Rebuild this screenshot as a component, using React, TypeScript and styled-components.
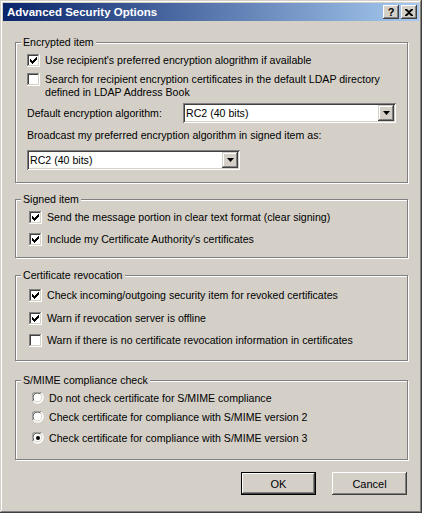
import React from "react";
import styled, { createGlobalStyle } from "styled-components";

const GlobalStyle = createGlobalStyle`
  html, body {
    margin: 0;
    padding: 0;
    background: #d4d0c8;
  }
  body {
    font-family: "Liberation Sans", Arial, sans-serif;
    font-size: 10.6px;
    color: #000;
  }
`;

const Window = styled.div`
  width: 422px;
  height: 513px;
  box-sizing: border-box;
  padding: 3px;
  background: #d4d0c8;
  box-shadow: inset -1px -1px 0 #404040, inset 1px 1px 0 #d4d0c8,
    inset -2px -2px 0 #808080, inset 2px 2px 0 #fff;
  display: flex;
  flex-direction: column;
`;

const TitleBar = styled.div`
  height: 18px;
  display: flex;
  align-items: center;
  padding: 0 2px;
  background: linear-gradient(to right, #0a246a, #a6caf0);
`;

const Title = styled.div`
  color: #fff;
  font-weight: bold;
  font-size: 11.5px;
  margin-left: 2px;
  flex: 1;
`;

const CaptionButtons = styled.div`
  display: flex;
  gap: 2px;
`;

const CaptionButton = styled.div`
  width: 16px;
  height: 14px;
  box-sizing: border-box;
  background: #d4d0c8;
  box-shadow: inset -1px -1px 0 #404040, inset 1px 1px 0 #fff,
    inset -2px -2px 0 #808080;
  display: flex;
  align-items: center;
  justify-content: center;
  font-weight: bold;
  font-size: 11px;
  line-height: 14px;
`;

const Content = styled.div`
  display: flex;
  flex-direction: column;
  padding: 15px 11px 0 12px;
`;

const Group = styled.fieldset<{ $mt?: number }>`
  margin: ${(p) => p.$mt ?? 0}px 0 0 0;
  padding: 0;
  min-width: 0;
  border: 1px solid #808080;
  box-shadow: 1px 1px 0 #fff, inset 1px 1px 0 #fff;
`;

const Legend = styled.legend`
  margin-left: 5px;
  padding: 0 2px;
  line-height: 13px;
  background: #d4d0c8;
`;

const GroupBody = styled.div<{ $pl: number; $pb: number }>`
  display: flex;
  flex-direction: column;
  align-items: flex-start;
  padding: 0 10px ${(p) => p.$pb}px ${(p) => p.$pl}px;
`;

const OptionRow = styled.div<{ $mt: number }>`
  display: flex;
  align-items: flex-start;
  gap: 5px;
  margin-top: ${(p) => p.$mt}px;
  line-height: 13px;
`;

const Label = styled.div<{ $mt?: number; $w?: number }>`
  line-height: 13px;
  margin-top: ${(p) => p.$mt ?? 0}px;
  ${(p) => (p.$w ? `width: ${p.$w}px; flex-shrink: 0;` : "")}
`;

const FieldRow = styled.div<{ $mt: number }>`
  display: flex;
  align-items: center;
  margin-top: ${(p) => p.$mt}px;
`;

const Select = styled.div<{ $mt?: number }>`
  width: 213px;
  height: 20px;
  box-sizing: border-box;
  padding: 2px;
  margin-top: ${(p) => p.$mt ?? 0}px;
  background: #fff;
  box-shadow: inset 1px 1px 0 #808080, inset -1px -1px 0 #fff,
    inset 2px 2px 0 #404040, inset -2px -2px 0 #d4d0c8;
  display: flex;
`;

const SelectValue = styled.div`
  flex: 1;
  padding-left: 1px;
  line-height: 16px;
`;

const ArrowButton = styled.div`
  width: 16px;
  height: 16px;
  box-sizing: border-box;
  background: #d4d0c8;
  box-shadow: inset -1px -1px 0 #404040, inset 1px 1px 0 #d4d0c8,
    inset -2px -2px 0 #808080, inset 2px 2px 0 #fff;
  display: flex;
  align-items: center;
  justify-content: center;
`;

const ButtonRow = styled.div`
  display: flex;
  justify-content: flex-end;
  gap: 16px;
  margin-top: 12px;
  padding-right: 1px;
`;

const PushButton = styled.div<{ $default?: boolean }>`
  width: 75px;
  height: 23px;
  box-sizing: border-box;
  background: #d4d0c8;
  display: flex;
  align-items: center;
  justify-content: center;
  font-size: 11px;
  box-shadow: ${(p) =>
    p.$default
      ? "inset 0 0 0 1px #000, inset -2px -2px 0 #404040, inset 2px 2px 0 #fff, inset -3px -3px 0 #808080"
      : "inset -1px -1px 0 #404040, inset 1px 1px 0 #fff, inset -2px -2px 0 #808080"};
`;

const CHECK =
  "M3 5h1v3h-1z M4 6h1v3h-1z M5 7h1v3h-1z M6 6h1v3h-1z M7 5h1v3h-1z M8 4h1v3h-1z M9 3h1v3h-1z";

function CheckBox({ checked }: { checked?: boolean }) {
  return (
    <svg width="13" height="13" viewBox="0 0 13 13" style={{ flexShrink: 0 }}>
      <rect x="0" y="0" width="13" height="13" fill="#fff" />
      <rect x="0" y="0" width="12" height="1" fill="#808080" />
      <rect x="0" y="0" width="1" height="12" fill="#808080" />
      <rect x="1" y="1" width="10" height="1" fill="#404040" />
      <rect x="1" y="1" width="1" height="10" fill="#404040" />
      <rect x="1" y="11" width="11" height="1" fill="#d4d0c8" />
      <rect x="11" y="1" width="1" height="11" fill="#d4d0c8" />
      {checked && <path d={CHECK} fill="#000" />}
    </svg>
  );
}

function Radio({ checked }: { checked?: boolean }) {
  return (
    <svg width="12" height="12" viewBox="0 0 12 12" style={{ flexShrink: 0, marginLeft: 2 }}>
      <circle cx="6" cy="6" r="5.5" fill="#fff" />
      <path d="M1.2 9.4 A5 5 0 0 1 9.4 1.2" fill="none" stroke="#808080" strokeWidth="1" />
      <path d="M2.3 8.6 A4 4 0 0 1 8.6 2.3" fill="none" stroke="#404040" strokeWidth="1" />
      <path d="M9.4 1.2 A5 5 0 0 1 1.2 9.4" fill="none" stroke="#fff" strokeWidth="1" />
      <path d="M8.6 2.3 A4 4 0 0 1 2.3 8.6" fill="none" stroke="#d4d0c8" strokeWidth="1" />
      {checked && <circle cx="6" cy="6" r="2" fill="#000" />}
    </svg>
  );
}

function DropDown({ value, mt }: { value: string; mt?: number }) {
  return (
    <Select $mt={mt}>
      <SelectValue>{value}</SelectValue>
      <ArrowButton>
        <svg width="7" height="4" viewBox="0 0 7 4">
          <path d="M0 0h7L3.5 4z" fill="#000" />
        </svg>
      </ArrowButton>
    </Select>
  );
}

export default function App() {
  return (
    <>
      <GlobalStyle />
      <Window>
        <TitleBar>
          <Title>Advanced Security Options</Title>
          <CaptionButtons>
            <CaptionButton>?</CaptionButton>
            <CaptionButton>
              <svg width="8" height="7" viewBox="0 0 8 7">
                <path
                  d="M0 0h2l2 2 2-2h2v1L5 3.5 8 6v1H6L4 5 2 7H0V6l3-2.5L0 1z"
                  fill="#000"
                />
              </svg>
            </CaptionButton>
          </CaptionButtons>
        </TitleBar>

        <Content>
          <Group>
            <Legend>Encrypted item</Legend>
            <GroupBody $pl={11} $pb={12}>
              <OptionRow $mt={5}>
                <CheckBox checked />
                <span>Use recipient's preferred encryption alogrithm if available</span>
              </OptionRow>
              <OptionRow $mt={6}>
                <CheckBox />
                <span>
                  Search for recipient encryption certificates in the default LDAP directory
                  <br />
                  defined in LDAP Address Book
                </span>
              </OptionRow>
              <FieldRow $mt={4}>
                <Label $w={156}>Default encryption algorithm:</Label>
                <DropDown value="RC2 (40 bits)" />
              </FieldRow>
              <Label $mt={6}>Broadcast my preferred encryption algorithm in signed item as:</Label>
              <DropDown value="RC2 (40 bits)" mt={8} />
            </GroupBody>
          </Group>

          <Group $mt={10}>
            <Legend>Signed item</Legend>
            <GroupBody $pl={13} $pb={11}>
              <OptionRow $mt={5}>
                <CheckBox checked />
                <span>Send the message portion in clear text format (clear signing)</span>
              </OptionRow>
              <OptionRow $mt={9}>
                <CheckBox checked />
                <span>Include my Certificate Authority's certificates</span>
              </OptionRow>
            </GroupBody>
          </Group>

          <Group $mt={11}>
            <Legend>Certificate revocation</Legend>
            <GroupBody $pl={13} $pb={13}>
              <OptionRow $mt={7}>
                <CheckBox checked />
                <span>Check incoming/outgoing security item for revoked certificates</span>
              </OptionRow>
              <OptionRow $mt={10}>
                <CheckBox checked />
                <span>Warn if revocation server is offline</span>
              </OptionRow>
              <OptionRow $mt={9}>
                <CheckBox />
                <span>Warn if there is no certificate revocation information in certificates</span>
              </OptionRow>
            </GroupBody>
          </Group>

          <Group $mt={13}>
            <Legend>S/MIME compliance check</Legend>
            <GroupBody $pl={14} $pb={14}>
              <OptionRow $mt={5}>
                <Radio />
                <span>Do not check certificate for S/MIME compliance</span>
              </OptionRow>
              <OptionRow $mt={6}>
                <Radio />
                <span>Check certificate for compliance with S/MIME version 2</span>
              </OptionRow>
              <OptionRow $mt={8}>
                <Radio checked />
                <span>Check certificate for compliance with S/MIME version 3</span>
              </OptionRow>
            </GroupBody>
          </Group>

          <ButtonRow>
            <PushButton $default>OK</PushButton>
            <PushButton>Cancel</PushButton>
          </ButtonRow>
        </Content>
      </Window>
    </>
  );
}
